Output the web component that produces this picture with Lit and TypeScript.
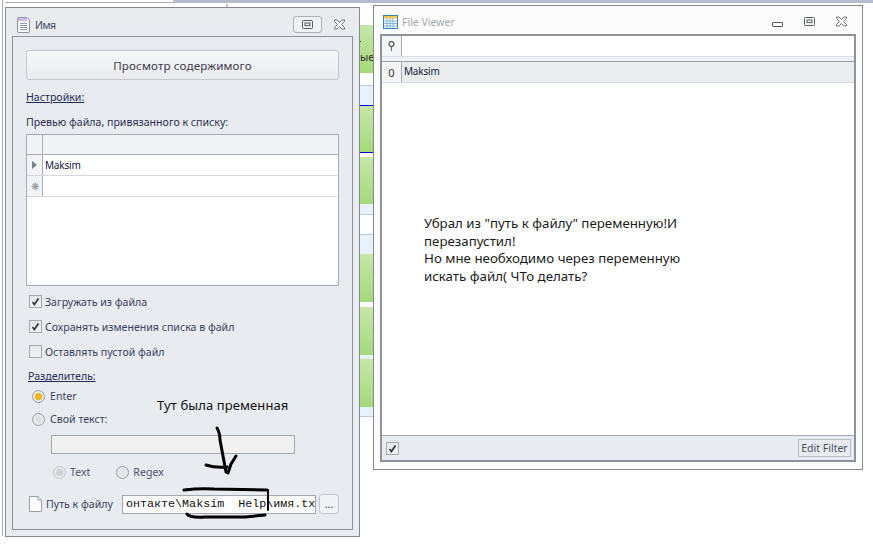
import { LitElement, html, css, svg } from "lit";
import { customElement } from "lit/decorators.js";

const check = svg`<path d="M3 6.5 L5.2 9.5 L10 2.5" fill="none" stroke="#333" stroke-width="2"/>`;
const closeIcon = html`<svg width="13" height="11" viewBox="0 0 13 11"><path d="M1.5 1 L4 1 L6.5 3.5 L9 1 L11.5 1 L11.5 2.5 L8.5 5.5 L11.5 8.5 L11.5 10 L9 10 L6.5 7.5 L4 10 L1.5 10 L1.5 8.5 L4.5 5.5 L1.5 2.5 Z" fill="#fff" stroke="#6a6f75"/></svg>`;
const maxIcon = html`<svg width="11" height="9" viewBox="0 0 11 9"><rect x=".5" y=".5" width="10" height="8" rx="1" fill="none" stroke="#555a60"/><rect x="3" y="3" width="5" height="2.6" fill="none" stroke="#555a60"/></svg>`;

@customElement("app-root")
export class AppRoot extends LitElement {
  static styles = css`
    :host { display: block; width: 873px; height: 546px; position: relative; overflow: hidden; background: #fff;
      font-family: "Noto Sans", sans-serif; font-size: 10.6px; color: #2a3050; }
    .topstrip { position: absolute; left: 173px; right: 0; top: 0; height: 3px; background: #b4bdc9; }
    .topleft { position: absolute; left: 5px; width: 168px; top: 2px; height: 1px; background: #a8afba; }
    .leftline { position: absolute; left: 2px; width: 1px; top: 0; height: 536px; background: #a8afba; }
    .tick { position: absolute; left: 226px; top: 4px; width: 2px; height: 3px; background: #c4c4ea; }
    .backdrop { position: absolute; left: 360px; width: 13px; top: 25px; display: flex; flex-direction: column; overflow: hidden; }
    .g { background: linear-gradient(#c6e6aa, #a3da7b); flex: none; }
    .l { background: #e9f2fc; flex: none; }
    .w { background: #fff; flex: none; }
    .b { background: #0000e0; height: 1px; flex: none; }
    .bl { background: #b5cde6; height: 1px; flex: none; }
    .backtext { position: absolute; left: 360px; top: 50px; color: #333; font-size: 11px; line-height: 14px; white-space: nowrap; }
    .dot { position: absolute; left: 360px; top: 41px; width: 1px; height: 1px; background: #333; }

    .win { position: absolute; box-sizing: border-box; border: 1px solid #85888c; display: flex; flex-direction: column; }
    .left { left: 5px; top: 7px; width: 355px; height: 530px; background: linear-gradient(#e9ebee 0, #e8ebf0 30px); }
    .title { box-sizing: border-box; height: 28px; display: flex; align-items: center; flex: none; }
    .left .title { padding: 5px 13px 0 11px; }
    .left .ttext { margin-left: 5px; color: #3c4660; font-size: 10.5px; letter-spacing: -.5px; }
    .sp { flex: 1; }
    .maxbtn { box-sizing: border-box; width: 29px; height: 17px; border: 1px solid #aab0b8; border-radius: 3px; background: #eff1f4; display: flex; align-items: center; justify-content: center; margin-right: 11px; }
    .xbtn { display: flex; }
    .panel { flex: 1; margin: 0 6px 6px 6px; box-sizing: border-box; border: 1px solid #8e9299; background: #e8ebf0; padding: 13px 13px 0 13px; display: flex; flex-direction: column; }
    .bigbtn { box-sizing: border-box; height: 30px; border: 1px solid #c3c8cf; border-radius: 3px; background: linear-gradient(#f5f7f9, #e9ebef); display: flex; align-items: center; justify-content: center; font-size: 11.6px; color: #3f3a4e; letter-spacing: .15px; }
    .u { text-decoration: underline; color: #232c58; }
    .settings { margin-top: 9px; line-height: 16px; }
    .preview { margin-top: 9px; line-height: 16px; }
    .grid { margin-top: 4px; box-sizing: border-box; height: 152px; border: 1px solid #a6acb6; background: #fff; }
    .ghead { display: flex; height: 19px; background: #f1f3f6; border-bottom: 1px solid #a6acb6; }
    .ind { box-sizing: border-box; width: 16px; flex: none; border-right: 1px solid #a6acb6; background: #f1f3f6; display: flex; align-items: center; justify-content: center; color: #8a8f96; }
    .grow { display: flex; height: 20px; border-bottom: 1px solid #d5d8dc; }
    .cell { padding-left: 2px; line-height: 20px; color: #11183a; font-size: 10px; letter-spacing: -.2px; flex: 1; }
    .tri { width: 0; height: 0; border-left: 5px solid #7a7f86; border-top: 4px solid transparent; border-bottom: 4px solid transparent; }
    .star { font-size: 10px; line-height: 1; color: #8a8f96; }
    .chk { display: flex; align-items: center; height: 13px; margin-left: 3px; color: #3a4160; }
    .cb { box-sizing: border-box; width: 13px; height: 13px; border: 1px solid #a5a9b0; background: linear-gradient(#e4e6e9, #f2f3f5); margin-right: 3px; flex: none; display: flex; }
    .c1 { margin-top: 9px; } .c2 { margin-top: 12px; }
    .delim { margin-top: 10px; margin-left: 2px; line-height: 16px; }
    .rad { display: flex; align-items: center; height: 14px; margin-left: 6px; color: #3a4160; }
    .r { box-sizing: border-box; width: 13px; height: 13px; border-radius: 50%; border: 1px solid #9a9ea5; background: radial-gradient(#d8dadd, #f2f3f5); margin-right: 5px; display: flex; align-items: center; justify-content: center; flex: none; }
    .r.on::after { content: ""; width: 7px; height: 7px; border-radius: 50%; background: #f2b31e; }
    .r.dis { border-color: #bfc2c7; }
    .r.dis::after { content: ""; width: 7px; height: 7px; border-radius: 50%; background: #cfd1d4; }
    .r.off { background: #e4e6e9; }
    .first { margin-top: 5px; } .second { margin-top: 9px; }
    .field { margin: 9px 0 0 25px; width: 244px; height: 19px; box-sizing: border-box; border: 1px solid #a3a5a8; background: #f0f0f0; }
    .rad2 { display: flex; margin: 11px 0 0 27px; height: 14px; gap: 26px; color: #4c5370; }
    .rad2 > div { display: flex; align-items: center; }
    .rad2 .r { margin-right: 4px; }
    .pathrow { display: flex; align-items: center; margin-top: 15px; height: 20px; margin-left: 3px; }
    .pathlbl { margin-left: 4px; width: 76px; color: #3a4160; white-space: nowrap; }
    .input { box-sizing: border-box; width: 194px; height: 19px; border: 1px solid #a3a8b0; background: #fff; padding-left: 3px; font-family: "Liberation Mono", monospace; font-size: 11.7px; line-height: 17px; white-space: pre; color: #111; }
    .dots { box-sizing: border-box; width: 20px; height: 20px; margin-left: 3px; border: 1px solid #c3c8cf; border-radius: 3px; background: #f0f2f5; text-align: center; line-height: 19px; }
    .ann { position: absolute; left: 157px; top: 396px; font-size: 13px; line-height: 18px; color: #111; white-space: nowrap; letter-spacing: .1px; }
    .draw { position: absolute; left: 0; top: 0; pointer-events: none; }

    .right { left: 373px; top: 5px; width: 490px; height: 465px; background: #fcfcfc; }
    .right .title { padding: 3px 14px 0 9px; }
    .right .ttext { margin-left: 4px; color: #a3a7ad; font-size: 10.5px; }
    .minbtn { width: 9px; height: 3px; border: 1px solid #555a60; border-radius: 1px; margin: 6px 21px 0 0; }
    .right .max2 { margin-right: 20px; display: flex; }
    .vpanel { flex: 1; margin: 0 6px 7px 6px; box-sizing: border-box; border: 2px solid #8e9299; background: #fff; display: flex; flex-direction: column; }
    .fr { display: flex; height: 20px; border-bottom: 1px solid #d9dee4; }
    .sep { height: 4px; background: #eef1f5; border-bottom: 1px solid #9ea3aa; }
    .vrow { display: flex; height: 20px; background: #ebecee; border-bottom: 1px solid #d5d8dc; }
    .vind { box-sizing: border-box; width: 20px; flex: none; border-right: 1px solid #a6acb6; background: #f4f5f7; display: flex; align-items: center; justify-content: center; }
    .vind.num { color: #333; font-size: 11px; }
    .vcell { padding-left: 2px; line-height: 18px; color: #11183a; font-size: 10px; letter-spacing: -.2px; }
    .body { flex: 1; padding: 132px 0 0 42px; font-size: 13.3px; line-height: 17.7px; color: #1c1c1c; white-space: nowrap; }
    .foot { height: 25px; box-sizing: border-box; background: #e8ebf0; border-top: 1px solid #a6acb6; display: flex; align-items: center; padding: 0 3px 0 4px; }
    .foot .cb { margin-top: 1px; }
    .edit { box-sizing: border-box; height: 18px; width: 53px; border: 1px solid #b9bdc3; text-align: center; line-height: 16px; color: #4a4f5a; font-size: 10.5px; white-space: nowrap; }
  `;

  render() {
    const seg = (c: string, h: number) => html`<div class=${c} style="height:${h}px"></div>`;
    return html`
      <div class="topstrip"></div><div class="topleft"></div><div class="leftline"></div><div class="tick"></div>
      <div class="backdrop">
        ${seg("g", 48)}${seg("w", 12)}<div class="bl"></div>${seg("l", 19)}<div class="b"></div>
        ${seg("g", 46)}<div class="b"></div>${seg("w", 4)}
        ${seg("g", 47)}${seg("l", 10)}<div class="bl"></div>
        ${seg("w", 19)}<div class="bl"></div>${seg("l", 19)}
        ${seg("g", 48)}${seg("w", 5)}
        ${seg("g", 48)}${seg("l", 4)}
        ${seg("g", 48)}${seg("l", 9)}<div class="bl"></div>
      </div>
      <div class="dot"></div>
      <div class="backtext">ые</div>

      <div class="win left">
        <div class="title">
          <svg width="13" height="16" viewBox="0 0 13 16"><path d="M.5 1.5 Q.5 .5 1.5 .5 H10 L12.5 3 V14.5 Q12.5 15.5 11.5 15.5 H1.5 Q.5 15.5 .5 14.5 Z" fill="#f4f4f6" stroke="#8f9398"/><rect x="1" y="1" width="9" height="3" fill="#c9bce8"/><path d="M3 6.5H10M3 8.5H10M3 10.5H10M3 12.5H10" stroke="#9aa0a8"/></svg>
          <span class="ttext">Имя</span><span class="sp"></span>
          <div class="maxbtn">${maxIcon}</div><div class="xbtn">${closeIcon}</div>
        </div>
        <div class="panel">
          <div class="bigbtn">Просмотр содержимого</div>
          <div class="settings"><span class="u">Настройки:</span></div>
          <div class="preview">Превью файла, привязанного к списку:</div>
          <div class="grid">
            <div class="ghead"><div class="ind"></div></div>
            <div class="grow"><div class="ind"><span class="tri"></span></div><div class="cell">Maksim</div></div>
            <div class="grow"><div class="ind"><span class="star">❋</span></div><div class="cell"></div></div>
          </div>
          <div class="chk c1"><span class="cb"><svg width="11" height="11" viewBox="0 0 13 12">${check}</svg></span>Загружать из файла</div>
          <div class="chk c2"><span class="cb"><svg width="11" height="11" viewBox="0 0 13 12">${check}</svg></span>Сохранять изменения списка в файл</div>
          <div class="chk c2"><span class="cb"></span>Оставлять пустой файл</div>
          <div class="delim"><span class="u">Разделитель:</span></div>
          <div class="rad first"><span class="r on"></span>Enter</div>
          <div class="rad second"><span class="r"></span>Свой текст:</div>
          <div class="field"></div>
          <div class="rad2"><div><span class="r dis"></span>Text</div><div><span class="r off"></span>Regex</div></div>
          <div class="pathrow">
            <svg width="13" height="16" viewBox="0 0 13 16"><path d="M.5 .5 H9 L12.5 4 V15.5 H.5 Z" fill="#fdfdfd" stroke="#9a9ea5"/><path d="M9 .5 V4 H12.5" fill="#eee" stroke="#9a9ea5"/></svg>
            <span class="pathlbl">Путь к файлу</span>
            <div class="input">онтакте\\Maksim  Help\\имя.tx</div>
            <div class="dots">...</div>
          </div>
        </div>
      </div>

      <div class="win right">
        <div class="title">
          <svg width="15" height="14" viewBox="0 0 15 14"><rect x=".5" y=".5" width="14" height="13" fill="#fff" stroke="#2f86c6"/><rect x="1" y="1" width="13" height="2.5" fill="#f4c65a"/><path d="M1 6H14M1 8.5H14M1 11H14M4 3V13M7 3V13M10 3V13" stroke="#7fb4de"/></svg>
          <span class="ttext">File Viewer</span><span class="sp"></span>
          <div class="minbtn"></div>
          <div class="max2">${maxIcon}</div>
          <div class="xbtn">${closeIcon}</div>
        </div>
        <div class="vpanel">
          <div class="fr"><div class="vind"><svg width="7" height="10" viewBox="0 0 7 10"><circle cx="3.5" cy="3" r="2.4" fill="none" stroke="#666" stroke-width="1.4"/><path d="M3.5 5V10" stroke="#666"/></svg></div></div>
          <div class="sep"></div>
          <div class="vrow"><div class="vind num">0</div><div class="vcell">Maksim</div></div>
          <div class="body">Убрал из "путь к файлу" переменную!И<br>перезапустил!<br>Но мне необходимо через переменную<br>искать файл( ЧТо делать?</div>
          <div class="foot"><span class="cb"><svg width="11" height="11" viewBox="0 0 13 12">${check}</svg></span><span class="sp"></span><div class="edit">Edit Filter</div></div>
        </div>
      </div>

      <div class="ann">Тут была пременная</div>
      <svg class="draw" width="873" height="546" fill="none" stroke="#000" stroke-linecap="round" stroke-linejoin="round">
        <path d="M217 428 Q220 433 220 440 L226 472 L228 473 L231 464 L236 456" stroke-width="3"/>
        <path d="M206 465 Q215 468 227 467" stroke-width="3"/>
        <path d="M184 490 Q200 488 214 489 L267 490" stroke-width="3"/>
        <path d="M187 514 Q190 518 205 517 L245 517 L265 515" stroke-width="3"/>
        <path d="M268 490 L268 510" stroke-width="2"/>
      </svg>
    `;
  }
}
